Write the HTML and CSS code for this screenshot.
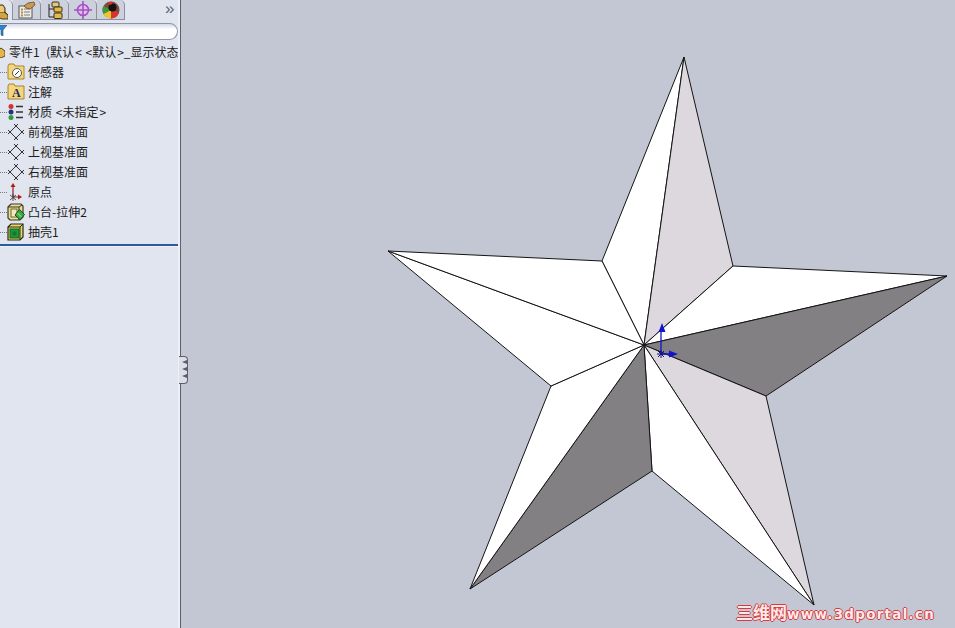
FILE: index.html
```html
<!DOCTYPE html>
<html lang="zh-CN">
<head>
    <meta charset="UTF-8">
    <title>零件1</title>
    <link rel="stylesheet" href="styles.css">
</head>
<body>
    <div class="panel">
        <div class="tabs">
            <div class="tab tab-first">
                <svg width="8" height="19" viewBox="0 0 8 19"><path d="M-2 3h5l2 3v4l3 3v4h-6l-4-2z" fill="#d2a544" stroke="#4a3814"/><path d="M-2 10h6l4 3" fill="none" stroke="#4a3814"/><path d="M0 4h3l1 3v3H0z" fill="#e8cb7a"/></svg>
            </div>
            <div class="tab">
                <svg width="18" height="18" viewBox="0 0 18 18"><rect x="1" y="5" width="13" height="12" fill="#efeee6" stroke="#55555a"/><path d="M6 8h6M6 11h6M6 14h6" stroke="#7a7a80"/><rect x="3" y="7.500" width="2" height="2" fill="#b88838"/><rect x="3" y="10.500" width="2" height="2" fill="#b88838"/><rect x="3" y="13.500" width="2" height="2" fill="#b88838"/><path d="M6 5l4-3 6-1 1 3-5 4-4-1z" fill="#c9985a" stroke="#6b4d1c" stroke-width=".8"/></svg>
            </div>
            <div class="tab">
                <svg width="18" height="18" viewBox="0 0 18 18"><path d="M3 3v13h6M3 8h6" fill="none" stroke="#222"/><rect x="6" y="1" width="7" height="5" rx="1" fill="#dcc888" stroke="#3a3018"/><rect x="8" y="6" width="8" height="5" rx="1" fill="#e2bc4a" stroke="#3a3018"/><rect x="8" y="12" width="8" height="5.500" rx="1" fill="#e2bc4a" stroke="#3a3018"/></svg>
            </div>
            <div class="tab">
                <svg width="18" height="18" viewBox="0 0 18 18"><circle cx="9" cy="9" r="5.500" fill="#ddc0ea" stroke="#a450c4" stroke-width="1.600"/><path d="M9 0v18M0 9h18" stroke="#a450c4" stroke-width="1.600"/></svg>
            </div>
            <div class="tab tab-last">
                <svg width="18" height="18" viewBox="0 0 18 18"><circle cx="9" cy="9" r="8.500" fill="#7b4a40"/><path d="M9 9L1.500 5a8.500 8.500 0 0 0 0 8z" fill="#3c9a3a"/><path d="M9 9l-7.500 4a8.500 8.500 0 0 0 7.500 4.500z" fill="#e8c82c"/><path d="M9 9v8.500a8.500 8.500 0 0 0 8-6z" fill="#d8342c"/><circle cx="10.500" cy="6.500" r="4" fill="#16120f"/><path d="M5 2a8.500 8.500 0 0 1 6-1l-2 3z" fill="#d8342c"/></svg>
            </div>
            <div class="tabs-more">&raquo;</div>
        </div>

        <div class="filter">
            <svg class="filter-icon" width="7" height="11" viewBox="0 0 7 11"><path d="M-3 0h10l-4 5v6l-2-1V5z" fill="#2c86c8" stroke="#17537f" stroke-width=".6"/></svg>
        </div>

        <ul class="tree">
            <li class="row row-root">
                <svg class="root-icon" width="5" height="12" viewBox="0 0 5 12"><path d="M-3 5l4-3 4 3v5l-4 2-4-2z" fill="#e4b648" stroke="#5c4716"/></svg>
                <span>零件1&nbsp;&nbsp;<b class="paren">(</b>默认<b class="angle">&lt;</b>&nbsp;<b class="angle">&lt;</b>默认<b class="angle">&gt;</b>_显示状态</span>
            </li>
            <li class="row">
                <svg width="18" height="18" viewBox="0 0 18 18"><path d="M1 3l1-2h5l1 2h9v13H1z" fill="#f4d67e" stroke="#a8852c"/><circle cx="10" cy="10" r="4.500" fill="#fff" stroke="#555"/><path d="M8 12l4-4" stroke="#333"/></svg>
                <span>传感器</span>
            </li>
            <li class="row">
                <svg width="18" height="18" viewBox="0 0 18 18"><path d="M1 3l1-2h5l1 2h9v13H1z" fill="#f4d67e" stroke="#a8852c"/><text x="5" y="14" class="glyph-a">A</text></svg>
                <span>注解</span>
            </li>
            <li class="row">
                <svg width="18" height="18" viewBox="0 0 18 18"><circle cx="4" cy="3.500" r="2.500" fill="#d6332c"/><circle cx="4" cy="9" r="2.500" fill="#24357c"/><circle cx="4" cy="14.500" r="2.500" fill="#2f9c3c"/><path d="M9 3.500h7M9 9h7M9 14.500h7" stroke="#333" stroke-width="1.600"/></svg>
                <span>材质&nbsp;<b class="angle">&lt;</b>未指定<b class="angle">&gt;</b></span>
            </li>
            <li class="row">
                <svg width="18" height="18" viewBox="0 0 18 18"><path class="plane" d="M1 11L11 1M7 1l10 10M17 7L7 17M11 17L1 7"/></svg>
                <span>前视基准面</span>
            </li>
            <li class="row">
                <svg width="18" height="18" viewBox="0 0 18 18"><path class="plane" d="M1 11L11 1M7 1l10 10M17 7L7 17M11 17L1 7"/></svg>
                <span>上视基准面</span>
            </li>
            <li class="row">
                <svg width="18" height="18" viewBox="0 0 18 18"><path class="plane" d="M1 11L11 1M7 1l10 10M17 7L7 17M11 17L1 7"/></svg>
                <span>右视基准面</span>
            </li>
            <li class="row">
                <svg width="18" height="18" viewBox="0 0 18 18"><path d="M6 3v11M6 14h8" stroke="#8c2020" stroke-width="1.200"/><path d="M6 0L3.500 4h5z" fill="#b01c1c"/><path d="M15 14l-4-2.500v5z" fill="#b01c1c"/><path d="M3 12l6 5M9 12l-6 5M6 11v7" stroke="#333" stroke-width=".8"/></svg>
                <span>原点</span>
            </li>
            <li class="row">
                <svg width="18" height="18" viewBox="0 0 18 18"><path d="M1 4l3-3h10l2 2v11l-3 3H3l-2-2z" fill="#e8dc9c" stroke="#3a3a20" stroke-width="1.200"/><path d="M1 4h11v13M12 4l3-2" fill="none" stroke="#3a3a20"/><rect x="4" y="6" width="6" height="8" fill="#f1e9bc" stroke="#6a6438"/><path d="M12.500 6.500l5 5-4.500 5.500-5-5z" fill="#3cab42" stroke="#14501c"/><path d="M10.500 10l4 4" stroke="#b8e4b0"/></svg>
                <span>凸台-拉伸2</span>
            </li>
            <li class="row">
                <svg width="18" height="18" viewBox="0 0 18 18"><path d="M1 4l3-3h12v13l-3 3H1z" fill="#e6dc6c" stroke="#26280f" stroke-width="1.200"/><path d="M1 4h12v13M13 4l3-3" fill="none" stroke="#26280f"/><rect x="3" y="6" width="9" height="9" fill="#1f9a3c" stroke="#0f5c20"/><rect x="5.500" y="8.500" width="4" height="4" fill="#17752c"/></svg>
                <span>抽壳1</span>
            </li>
        </ul>
        <div class="rollback"></div>
        <div class="grip">
            <i></i><i></i><i></i>
        </div>
    </div>

    <div class="viewport">
        <svg class="star" width="774" height="628" viewBox="181 0 774 628">
            <g stroke="#141414" stroke-width="1" stroke-linejoin="round">
                <path d="M644 345L602 261L684 57z" fill="#fff"/>
                <path d="M644 345L684 57L733 266z" fill="#dcd8de"/>
                <path d="M644 345L733 266L947 276z" fill="#fff"/>
                <path d="M644 345L947 276L766 396z" fill="#828083"/>
                <path d="M644 345L766 396L814 605z" fill="#dcd8de"/>
                <path d="M644 345L814 605L652 471z" fill="#fff"/>
                <path d="M644 345L652 471L470 589z" fill="#828083"/>
                <path d="M644 345L470 589L551 386z" fill="#fff"/>
                <path d="M644 345L551 386L388 251z" fill="#fff"/>
                <path d="M644 345L388 251L602 261z" fill="#fff"/>
            </g>
            <g fill="none" stroke="#1414c8" stroke-width="1.300">
                <path d="M661 354V330M661 354H676"/>
                <path d="M657 354h8M661 350v8M658 351l6 6M664 351l-6 6" stroke="#10107a" stroke-width="1"/>
            </g>
            <path d="M662 323l-3.500 9h7zM678 354l-9-3.500v7z" fill="#1414d0"/>
        </svg>
        <div class="watermark"><span class="watermark-cn">三维网</span>www.3dportal.cn</div>
    </div>
</body>
</html>
```

FILE: styles.css
```css
* {
    box-sizing: border-box;
}
html, body {
    height: 100%;
}
body {
    margin: 0;
    display: flex;
    overflow: hidden;
    background-color: #c2c7d3;
    font-family: "Noto Sans CJK SC", "Liberation Sans", sans-serif;
    font-size: 12px;
    color: #1c1c1c;
}

/* left panel */
.panel {
    position: relative;
    flex: none;
    width: 181px;
    background-color: #e1e5ef;
    border-right: 1px solid #5c606c;
    box-shadow: inset -2px 0 0 #eef0f6;
}
.tabs {
    display: flex;
    height: 20px;
}
.tab {
    display: flex;
    align-items: flex-start;
    justify-content: center;
    width: 28px;
    height: 20px;
    padding-top: 1px;
    border-right: 1px solid #8b909e;
    border-bottom: 1px solid #8b909e;
    border-radius: 0 5px 0 0;
    background-color: #cdd1dd;
}
.tab-first {
    width: 13px;
    justify-content: flex-start;
    padding-top: 2px;
    border-bottom: none;
    background-color: #e1e5ef;
}
.tab-last {
    margin-right: 40px;
}
.tabs-more {
    font-family: "Liberation Sans", sans-serif;
    font-size: 17px;
    line-height: 17px;
    color: #5f6470;
}
.filter {
    height: 17px;
    width: 178px;
    margin-top: 3px;
    margin-bottom: 2px;
    background-image: linear-gradient(#d6dae6, #fff 35%);
    border: 1px solid #8f95a5;
    border-left: none;
    border-radius: 0 9px 9px 0;
}
.filter-icon {
    display: block;
    margin-top: 1px;
}
.tree {
    list-style: none;
    margin: 0;
    padding: 0;
    width: 178px;
}
.row {
    display: flex;
    align-items: center;
    gap: 3px;
    height: 20px;
    padding-left: 7px;
    white-space: nowrap;
    overflow: hidden;
    background-image: repeating-linear-gradient(90deg, #777 0 1px, transparent 1px 2px);
    background-size: 7px 1px;
    background-repeat: no-repeat;
    background-position: 0 10px;
}
.row svg {
    flex: none;
}
.row span {
    margin-top: -2px;
}
.row-root {
    padding-left: 0;
    gap: 4px;
    background-image: none;
}
.row b {
    font-weight: normal;
}
.paren {
    padding-left: 1px;
}
.angle {
    padding-left: 1px;
}
.plane {
    fill: none;
    stroke: #333;
    stroke-width: 1;
}
.glyph-a {
    font-family: "Liberation Serif", serif;
    font-weight: bold;
    font-size: 12px;
    fill: #1c2a6a;
}
.rollback {
    width: 178px;
    height: 3px;
    margin-top: 2px;
    background-color: #2a5b9e;
    border-bottom: 1px solid #eef0f6;
}
.grip {
    position: absolute;
    top: 356px;
    left: 179px;
    display: flex;
    flex-direction: column;
    align-items: center;
    gap: 3px;
    width: 9px;
    height: 28px;
    padding-top: 3px;
    padding-left: 2px;
    background-color: #dcdfe8;
    border: 1px solid #5c606c;
    border-left: none;
    border-radius: 0 4px 4px 0;
}
.grip i {
    width: 0;
    height: 0;
    border-top: 2.500px solid transparent;
    border-bottom: 2.500px solid transparent;
    border-right: 5px solid #5a5f70;
}

/* graphics area */
.viewport {
    position: relative;
    flex: 1;
    min-width: 0;
}
.star {
    display: block;
}
.watermark {
    position: absolute;
    right: 20px;
    bottom: 5px;
    font-family: "DejaVu Sans", sans-serif;
    font-weight: bold;
    font-size: 13.500px;
    letter-spacing: 1.250px;
    line-height: 18px;
    white-space: nowrap;
    color: #ffeaea;
    text-shadow: 1px 0 0 #d8393c, -1px 0 0 #d8393c, 0 1px 0 #d8393c, 0 -1px 0 #d8393c;
}
.watermark-cn {
    font-family: "Noto Sans CJK SC", sans-serif;
    font-size: 17px;
    letter-spacing: 0;
}
```
